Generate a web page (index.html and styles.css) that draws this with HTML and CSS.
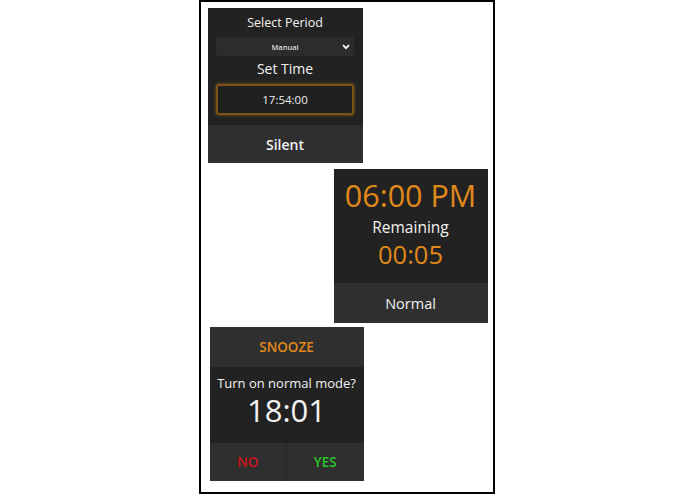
FILE: index.html
```html
<!DOCTYPE html>
<html>
<head>
<meta charset="utf-8">
<link rel="stylesheet" href="styles.css">
</head>
<body>
<div class="frame">
  <div class="panel p1">
    <div class="content">
      <div class="label">Select Period</div>
      <div class="select"><span>Manual</span>
        <svg class="chev" width="8" height="6" viewBox="0 0 8 6"><path d="M1 1.2 L4 4.2 L7 1.2" fill="none" stroke="#fff" stroke-width="1.8"/></svg>
      </div>
      <div class="label big">Set Time</div>
      <div class="input">17:54:00</div>
    </div>
    <div class="bar">Silent</div>
  </div>
  <div class="panel p2">
    <div class="content c2">
      <div class="clock orange">06:00 PM</div>
      <div class="rem">Remaining</div>
      <div class="count orange">00:05</div>
    </div>
    <div class="bar b2">Normal</div>
  </div>
  <div class="panel p3">
    <div class="head">SNOOZE</div>
    <div class="content c3">
      <div class="q">Turn on normal mode?</div>
      <div class="t">18:01</div>
    </div>
    <div class="btns">
      <div class="btn no">NO</div>
      <div class="btn yes">YES</div>
    </div>
  </div>
</div>
</body>
</html>
```
FILE: styles.css
```css
html, body { margin: 0; padding: 0; background: #fff; }
body { font-family: "Open Sans", "Noto Sans", sans-serif; color: #f2f2f2; }
.frame {
  width: 292px; height: 490px; margin: 0 auto; position: relative; left: -1px;
  border: 2px solid #000; display: flex; flex-direction: column; box-sizing: content-box;
}
.panel { width: 155px; height: 155px; background: #222; display: flex; flex-direction: column; }
.p1 { margin: 6px 0 0 7px; }
.p2 { margin: 6px 5px 0 0; align-self: flex-end; width: 154px; height: 154px; }
.p3 { margin: 4px 0 0 9px; width: 154px; height: 154px; }
.content { flex: 1; display: flex; flex-direction: column; align-items: center; }
.bar { height: 38px; background: #2f2f2f; display: flex; align-items: center; justify-content: center; font-size: 14px; font-weight: 600; }
.label { font-size: 12.5px; margin-top: 6px; line-height: 18px; }
.label.big { font-size: 14px; margin-top: 3px; line-height: 20px; }
.select {
  margin-top: 5px; width: 138px; height: 19px; background: #2c2c2c; border-radius: 2px;
  position: relative; display: flex; align-items: center; justify-content: center;
  font-size: 7.5px; font-weight: 600; color: #ddd;
}
.chev { position: absolute; right: 4px; top: 7px; }
.input {
  margin-top: 5px; width: 134px; height: 27px; border: 2px solid #7a5316; border-radius: 3px;
  box-shadow: 0 0 3px #9a6418; background: #1f1f1f;
  display: flex; align-items: center; justify-content: center; font-size: 11.5px; color: #eee;
}
.orange { color: #e0891a; }
.c2 { justify-content: flex-start; }
.clock { font-size: 30.5px; line-height: 36px; margin-top: 8px; }
.rem { font-size: 15.5px; line-height: 20px; margin-top: 4px; }
.count { font-size: 25.5px; line-height: 30px; margin-top: 2px; }
.b2 { height: 40px; font-weight: 400; font-size: 14.5px; }
.head { height: 40px; background: #2f2f2f; display: flex; align-items: center; justify-content: center; color: #e0891a; font-size: 13.5px; font-weight: 600; }
.c3 { justify-content: flex-start; }
.q { font-size: 13px; line-height: 18px; margin-top: 7px; }
.t { font-size: 31px; line-height: 36px; margin-top: 0px; }
.btns { height: 38px; display: flex; background: #2f2f2f; }
.btn { flex: 1; display: flex; align-items: center; justify-content: center; font-size: 13.5px; font-weight: 600; }
.btn.no { color: #c8141a; border-right: 1px solid #262626; }
.btn.yes { color: #2bc52b; }
```
